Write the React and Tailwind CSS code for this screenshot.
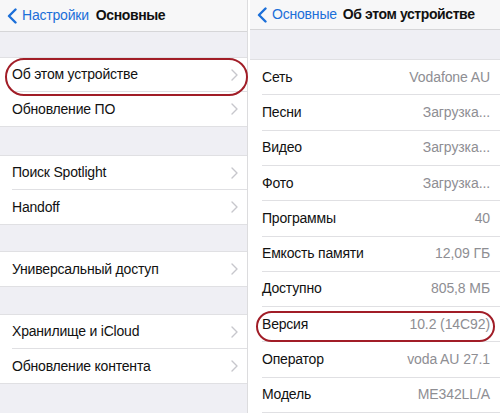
const font = { fontFamily: '"Liberation Sans", Arial, sans-serif' };

function BackChevron() {
  return (
    <svg width="10" height="16" viewBox="0 0 10 16" className="shrink-0">
      <polyline points="8.5,1.5 2,8 8.5,14.5" fill="none" stroke="#1b6fd9" strokeWidth="2.4" strokeLinecap="round" strokeLinejoin="round" />
    </svg>
  );
}

function Chevron() {
  return (
    <svg width="7" height="12" viewBox="0 0 7 12" className="shrink-0">
      <polyline points="1,1 6,6 1,11" fill="none" stroke="#c7c7cc" strokeWidth="1.4" strokeLinecap="round" strokeLinejoin="round" />
    </svg>
  );
}

function NavBar({ back, title, titleGap }) {
  return (
    <div className="flex h-[32px] items-center border-b border-[#d6d6d8] bg-[#f7f7f8] pl-[7px]">
      <BackChevron />
      <span className="ml-[5px] text-[14px] tracking-[-0.2px] text-[#1b6fd9]">{back}</span>
      <span className={`${titleGap} text-[14px] font-bold tracking-[-0.4px] text-[#111]`}>{title}</span>
    </div>
  );
}

function Group({ items }) {
  return (
    <div className="border-y border-[#e0e0e3] bg-white">
      {items.map((label, i) => (
        <div key={label} className="pl-[12px]">
          <div className={`flex h-[34px] items-center pr-[9px] ${i < items.length - 1 ? "border-b border-[#e0e0e3]" : ""}`}>
            <span className="flex-1 text-[14px] tracking-[-0.2px] text-[#111]">{label}</span>
            <Chevron />
          </div>
        </div>
      ))}
    </div>
  );
}

const info = [
  ["Сеть", "Vodafone AU"],
  ["Песни", "Загрузка..."],
  ["Видео", "Загрузка..."],
  ["Фото", "Загрузка..."],
  ["Программы", "40"],
  ["Емкость памяти", "12,09 ГБ"],
  ["Доступно", "805,8 МБ"],
  ["Версия", "10.2 (14C92)"],
  ["Оператор", "voda AU 27.1"],
  ["Модель", "ME342LL/A"],
];

export default function App() {
  return (
    <div className="relative flex h-[413px] w-[500px] overflow-hidden bg-white" style={font}>
      <div className="flex w-[248px] flex-col border-r border-[#dcdcde] bg-[#efeff4]">
        <NavBar back="Настройки" title="Основные" titleGap="ml-[7px]" />
        <div className="h-[25px]" />
        <Group items={["Об этом устройстве", "Обновление ПО"]} />
        <div className="h-[28px]" />
        <Group items={["Поиск Spotlight", "Handoff"]} />
        <div className="h-[26px]" />
        <Group items={["Универсальный доступ"]} />
        <div className="h-[27px]" />
        <Group items={["Хранилище и iCloud", "Обновление контента"]} />
      </div>

      <div className="ml-[2px] flex flex-1 flex-col bg-[#efeff4]">
        <NavBar back="Основные" title="Об этом устройстве" titleGap="ml-[6px]" />
        <div className="h-[30px]" />
        <div className="border-t border-[#e0e0e3] bg-white pl-[12px]">
          {info.map(([label, value]) => (
            <div key={label} className="flex h-[35.3px] items-center border-b border-[#e0e0e3] pr-[10px]">
              <span className="flex-1 text-[14px] tracking-[-0.2px] text-[#111]">{label}</span>
              <span className="text-[14px] tracking-[-0.1px] text-[#8e8e93]">{value}</span>
            </div>
          ))}
        </div>
      </div>

      <div className="absolute left-[5px] top-[58px] h-[38px] w-[243px] rounded-full border-2 border-[#a11d27]" />
      <div className="absolute left-[256px] top-[311px] h-[31px] w-[239px] rounded-full border-2 border-[#a11d27]" />
    </div>
  );
}
